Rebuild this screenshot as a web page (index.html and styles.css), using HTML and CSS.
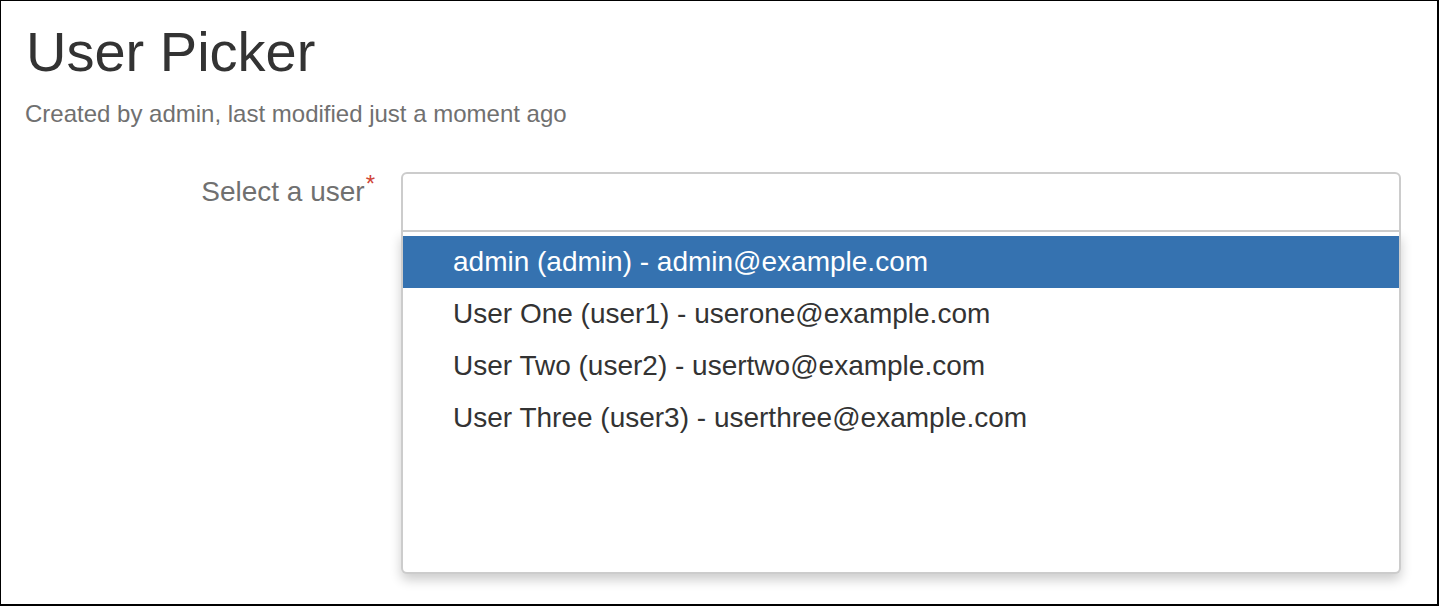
FILE: index.html
```html
<!DOCTYPE html>
<html lang="en">
<head>
<meta charset="utf-8">
<title>User Picker</title>
<link rel="stylesheet" href="styles.css">
</head>
<body>
<div class="frame">
  <h1 class="title">User Picker</h1>
  <p class="meta">Created by admin, last modified just a moment ago</p>
  <div class="form-row">
    <label class="label" for="user">Select a user<span class="req">*</span></label>
    <div class="picker">
      <div class="picker-input"><input id="user" type="text" aria-label="Select a user"></div>
      <ul class="results">
        <li class="result active">admin (admin) - admin@example.com</li>
        <li class="result">User One (user1) - userone@example.com</li>
        <li class="result">User Two (user2) - usertwo@example.com</li>
        <li class="result">User Three (user3) - userthree@example.com</li>
      </ul>
    </div>
  </div>
</div>
</body>
</html>
```
FILE: styles.css
```css
html, body {
  margin: 0;
  padding: 0;
  background: #fff;
}
body {
  font-family: "Liberation Sans", Arial, sans-serif;
  color: #333;
}
.frame {
  box-sizing: border-box;
  width: 1439px;
  height: 606px;
  border: 1px solid #000;
  border-right-width: 2px;
  border-bottom-width: 2px;
  padding: 19px 0 0 24px;
}
.title {
  margin: 0 0 0 1px;
  font-size: 56px;
  line-height: 64px;
  font-weight: normal;
  color: #333;
}
.meta {
  margin: 14px 0 0 0;
  font-size: 24px;
  line-height: 32px;
  color: #707070;
}
.form-row {
  display: grid;
  grid-template-columns: 350px 1000px;
  column-gap: 26px;
  margin-top: 42px;
}
.label {
  font-size: 28px;
  line-height: 40px;
  color: #707070;
  text-align: right;
}
.req {
  color: #d04437;
  font-size: 24px;
  line-height: 0;
  vertical-align: 9px;
  margin-left: 1px;
}
.picker {
  display: flex;
  flex-direction: column;
}
.picker-input {
  position: relative;
  z-index: 1;
  height: 56px;
  border: 2px solid #ccc;
  border-radius: 6px 6px 0 0;
  background: #fff;
}
.picker-input input {
  box-sizing: border-box;
  width: 100%;
  height: 100%;
  border: 0;
  outline: none;
  background: transparent;
  padding: 0 20px;
  font: inherit;
  font-size: 28px;
}
.results {
  list-style: none;
  margin: 0;
  padding: 4px 0 0 0;
  height: 336px;
  border: 2px solid #ccc;
  border-top: 0;
  border-radius: 0 0 6px 6px;
  background: #fff;
  box-shadow: 0 6px 12px rgba(0, 0, 0, 0.2);
}
.result {
  height: 52px;
  line-height: 52px;
  padding-left: 50px;
  font-size: 28px;
  color: #333;
  white-space: nowrap;
}
.result.active {
  background: #3572b0;
  color: #fff;
}
```
